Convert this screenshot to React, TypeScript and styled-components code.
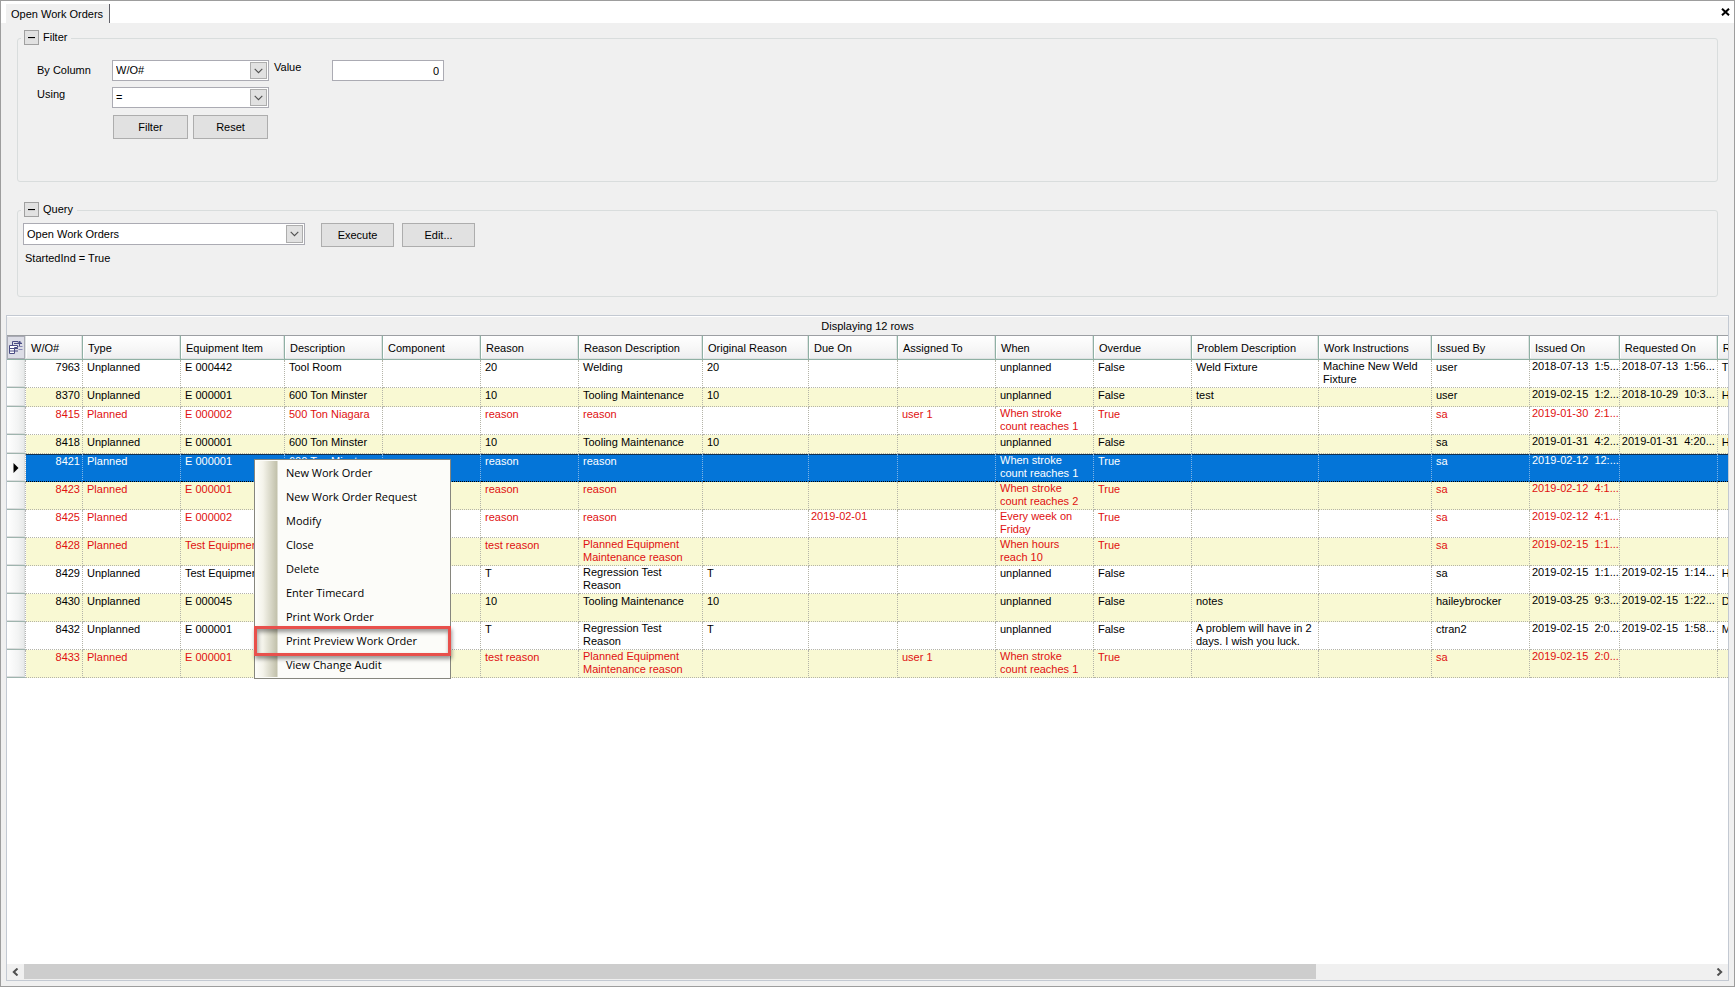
import React from "react";
import styled, { createGlobalStyle, css } from "styled-components";

const GlobalStyle = createGlobalStyle`
  *, *::before, *::after { box-sizing: border-box; }
  body {
    margin: 0;
    font-family: "Liberation Sans", Arial, sans-serif;
    font-size: 11px;
    line-height: 13px;
    color: #000;
  }
  button, input, select { font: inherit; color: inherit; }
`;

const Window = styled.div`
  display: flex;
  flex-direction: column;
  height: 100vh;
  min-height: 720px;
  border: 1px solid #9d9d9d;
  background: #f0f0f0;
  overflow: hidden;
`;

const TabStrip = styled.div`
  display: flex;
  justify-content: space-between;
  align-items: stretch;
  height: 22px;
  padding: 3px 4px 0 5px;
  background: #fff;
  flex: none;
`;

const Tab = styled.button`
  border: 0;
  border-right: 1px solid #606068;
  background: #f0f0f0;
  padding: 2px 6px 0 5px;
  white-space: nowrap;
`;

const CloseButton = styled.button`
  display: flex;
  align-items: center;
  border: 0;
  background: none;
  padding: 0 0 4px;
`;

const Panels = styled.div`
  display: flex;
  flex-direction: column;
  gap: 20px;
  padding: 7px 16px 0;
  flex: none;
`;

const Group = styled.section<{ $height: number }>`
  position: relative;
  min-height: ${(p) => p.$height}px;

  &::before {
    content: "";
    position: absolute;
    inset: 8px 0 0;
    border: 1px solid #d9dddd;
    border-radius: 3px;
  }
`;

const GroupHeader = styled.header`
  position: relative;
  display: flex;
  align-items: center;
  gap: 4px;
  width: fit-content;
  height: 15px;
  margin-left: 4px;
  padding: 0 4px 0 3px;
  background: #f0f0f0;
`;

const GroupTitle = styled.h2`
  margin: 0;
  font-size: 11px;
  font-weight: 400;
`;

const Toggle = styled.button`
  display: flex;
  align-items: center;
  justify-content: center;
  width: 15px;
  height: 15px;
  padding: 0;
  border: 1px solid #a0a0a0;
  background: #e1e1e1;
`;

const FilterForm = styled.form`
  position: relative;
  display: grid;
  grid-template-columns: 75px 157px 63px 112px;
  grid-template-rows: 21px 21px 24px;
  row-gap: 6px;
  padding: 15px 0 0 20px;
  align-items: center;
`;

const Label = styled.label<{ $raised?: boolean; $inset?: boolean }>`
  align-self: ${(p) => (p.$raised ? "start" : "center")};
  padding-top: ${(p) => (p.$raised ? 1 : 0)}px;
  padding-left: ${(p) => (p.$inset ? 5 : 0)}px;
`;

const ButtonRow = styled.div<{ $gap: number }>`
  display: flex;
  gap: ${(p) => p.$gap}px;
`;

const FilterButtons = styled(ButtonRow)`
  grid-column: 2;
  padding: 1px 0 0 1px;
`;

const PushButton = styled.button<{ $width: number }>`
  width: ${(p) => p.$width}px;
  height: 24px;
  padding: 1px 0 0;
  border: 1px solid #adadad;
  background: #e1e1e1;
`;

const TextInput = styled.input`
  width: 100%;
  height: 21px;
  padding: 0 4px;
  border: 1px solid #ababb3;
  background: #fff;
  text-align: right;
`;

const SelectBox = styled.div<{ $height: number }>`
  position: relative;
  height: ${(p) => p.$height}px;
`;

const SelectField = styled.select`
  appearance: none;
  width: 100%;
  height: 100%;
  padding: 0 20px 0 3px;
  border: 1px solid #ababb3;
  border-radius: 0;
  background: #fff;
`;

const SelectArrow = styled.span`
  position: absolute;
  inset: 2px 2px 2px auto;
  width: 17px;
  display: flex;
  align-items: center;
  justify-content: center;
  border: 1px solid #adadad;
  background: #e1e1e1;
  pointer-events: none;
`;

const QueryBody = styled.div`
  position: relative;
  display: flex;
  padding: 6px 0 0 6px;
  gap: 16px;
`;

const QuerySelect = styled.div`
  width: 282px;
`;

const QueryText = styled.p`
  position: relative;
  margin: 0;
  padding: 5px 0 0 8px;
`;

const Grid = styled.main`
  display: flex;
  flex-direction: column;
  flex: 1;
  min-height: 0;
  margin: 18px 5px 5px;
  border: 1px solid #c3c9d2;
  background: #fff;
`;

const Caption = styled.div`
  display: flex;
  align-items: center;
  justify-content: center;
  flex: none;
  height: 19px;
  border-top: 1px solid #fff;
  background: #f0f0f0;
`;

const TableArea = styled.div`
  flex: 1;
  min-height: 0;
  overflow: hidden;
`;

const Table = styled.table`
  width: max-content;
  table-layout: fixed;
  border-collapse: separate;
  border-spacing: 0;
`;

const HeadCell = styled.th`
  height: 25px;
  padding: 1px 4px 0 5px;
  border-top: 1px solid #9c9fa3;
  border-right: 1px solid #8fb0a4;
  border-bottom: 1px solid #8fb0a4;
  background: linear-gradient(#fff, #f6f6f6 60%, #ededf0);
  box-shadow: inset -1px -1px 0 #dfe3e2, inset 1px 1px 0 #fff;
  font-weight: 400;
  text-align: left;
  white-space: nowrap;
  overflow: hidden;
`;

const ChooserCell = styled(HeadCell)`
  padding: 0;
  border-right: 0;
`;

const ChooserButton = styled.button`
  display: flex;
  align-items: center;
  justify-content: center;
  width: 18px;
  height: 23px;
  padding: 0;
  border: 1px solid #a9aab4;
  background: #dcdde6;
`;

const RowHeader = styled.th`
  padding: 0;
  border-right: 1px dotted #b4b4b4;
  border-bottom: 1px solid #9fb4ae;
  background: linear-gradient(90deg, #fff, #f3f4f4 60%, #e6e8e8);
  box-shadow: inset -1px -1px 0 #dadddd;
  vertical-align: middle;

  svg { display: block; margin-left: 6px; }
`;

type Tone = "plain" | "overdue" | "selected";

const Row = styled.tr<{ $tone: Tone; $alternate: boolean; $tall: boolean }>`
  height: ${(p) => (p.$tall ? 28 : 19)}px;
  background: ${(p) => (p.$alternate ? "#f9f9d3" : "#fff")};
  color: ${(p) => (p.$tone === "overdue" ? "#e01010" : "#000")};

  ${(p) =>
    p.$tone === "selected" &&
    css`
      background: #0475d8;
      color: #fff;
    `}
`;

const cellPadding = { text: "4px", number: "2px", date: "1px 0 2px" };

const Cell = styled.td<{ $kind: "text" | "number" | "date"; $raised: boolean; $selected: boolean }>`
  height: inherit;
  padding: ${(p) => (p.$raised ? 0 : 1)}px ${(p) => cellPadding[p.$kind]} 0;
  ${(p) => p.$kind === "date" && "padding: 0 0 0 2px;"}
  border-right: 1px dotted ${(p) => (p.$selected ? "#7fb4e6" : "#b4b4a8")};
  border-bottom: 1px dotted ${(p) => (p.$selected ? "#000" : "#b4b4a8")};
  ${(p) => p.$selected && "box-shadow: inset 0 1px 0 #10304f;"}
  text-align: ${(p) => (p.$kind === "number" ? "right" : "left")};
  vertical-align: top;
  white-space: pre;
  overflow: hidden;
`;

const ScrollBar = styled.div`
  display: flex;
  flex: none;
  height: 16px;
  padding-bottom: 1px;
  background: #f0f0f0;
`;

const ScrollArrow = styled.button`
  display: flex;
  align-items: center;
  justify-content: center;
  width: 17px;
  padding: 0;
  border: 0;
  background: none;
`;

const ScrollTrack = styled.div`
  flex: 1;
`;

const ScrollThumb = styled.div`
  width: 76.6%;
  height: 100%;
  background: #cdcdcd;
`;

const Menu = styled.div`
  position: absolute;
  left: 254px;
  top: 459px;
  width: 197px;
  padding: 1px 0;
  border: 1px solid #86867e;
  background: #fcfcf9;
`;

const MenuItem = styled.button<{ $marked?: boolean }>`
  position: relative;
  display: block;
  width: 100%;
  height: 24px;
  padding: 0 0 0 31px;
  border: 0;
  background: linear-gradient(90deg, #fefefb, #f4f3ea 8px, #c2c1ab 22px, #fcfcf9 23px);
  font-family: "Open Sans", "Segoe UI", sans-serif;
  font-size: 11px;
  line-height: 24px;
  text-align: left;
  white-space: nowrap;

  ${(p) =>
    p.$marked &&
    css`
      z-index: 1;

      &::after {
        content: "";
        position: absolute;
        inset: -3px -1px;
        border: 3px solid #e8504c;
        box-shadow: 1px 3px 4px rgba(0, 0, 0, 0.4), inset 1px 3px 4px rgba(0, 0, 0, 0.4);
      }
    `}
`;

const Chevron = () => (
  <svg width="9" height="6" viewBox="0 0 9 6" aria-hidden="true">
    <path d="M0.7 0.8 L4.5 4.6 L8.3 0.8" fill="none" stroke="#505050" strokeWidth="1.1" />
  </svg>
);

const Minus = () => (
  <svg width="7" height="2" viewBox="0 0 7 2" aria-hidden="true">
    <path d="M0 0.5 H7" stroke="#000" strokeWidth="1.2" />
  </svg>
);

const CloseIcon = () => (
  <svg width="9" height="8" viewBox="0 0 9 8" aria-hidden="true">
    <path d="M1 0.7 L8 7.3 M8 0.7 L1 7.3" stroke="#000" strokeWidth="2" />
  </svg>
);

const CurrentRowIcon = () => (
  <svg width="6" height="10" viewBox="0 0 6 10" aria-hidden="true">
    <path d="M0.5 0 L5.5 5 L0.5 10 Z" fill="#000" />
  </svg>
);

const ChooserIcon = () => (
  <svg width="14" height="15" viewBox="0 0 14 15" aria-hidden="true">
    <g fill="none" stroke="#4a4c84" strokeWidth="1">
      <path d="M3.5 5 V1.5 H9" />
      <path d="M5 3.5 H13 M10.5 7 V1.5 M8.8 3 L10.5 1 L12.2 3" />
      <path d="M9.5 6.5 H13.5 M9.5 9.5 H13.5" stroke="#8485b4" />
      <path d="M0.5 5.5 H8.5 V7.5 H5.5 V13.5 H0.5 Z" fill="#fff" />
      <path d="M0.5 8.5 H9 M0.5 11 H9" />
    </g>
  </svg>
);

const Arrow = ({ direction }: { direction: "left" | "right" }) => (
  <svg width="7" height="8" viewBox="0 0 7 8" aria-hidden="true">
    <path
      d={direction === "left" ? "M5.5 0.5 L1.8 4 L5.5 7.5" : "M1.5 0.5 L5.2 4 L1.5 7.5"}
      fill="none"
      stroke="#505050"
      strokeWidth="2"
    />
  </svg>
);

interface SelectProps {
  id: string;
  label?: string;
  value: string;
  height?: number;
}

const Select = ({ id, label, value, height = 21 }: SelectProps) => (
  <SelectBox $height={height}>
    <SelectField id={id} aria-label={label} defaultValue={value}>
      <option>{value}</option>
    </SelectField>
    <SelectArrow>
      <Chevron />
    </SelectArrow>
  </SelectBox>
);

const columns: { title: string; width: number; kind: "text" | "number" | "date" }[] = [
  { title: "W/O#", width: 57, kind: "number" },
  { title: "Type", width: 98, kind: "text" },
  { title: "Equipment Item", width: 104, kind: "text" },
  { title: "Description", width: 98, kind: "text" },
  { title: "Component", width: 98, kind: "text" },
  { title: "Reason", width: 98, kind: "text" },
  { title: "Reason Description", width: 124, kind: "text" },
  { title: "Original Reason", width: 106, kind: "text" },
  { title: "Due On", width: 89, kind: "date" },
  { title: "Assigned To", width: 98, kind: "text" },
  { title: "When", width: 98, kind: "text" },
  { title: "Overdue", width: 98, kind: "text" },
  { title: "Problem Description", width: 127, kind: "text" },
  { title: "Work Instructions", width: 113, kind: "text" },
  { title: "Issued By", width: 98, kind: "text" },
  { title: "Issued On", width: 89, kind: "date" },
  { title: "Requested On", width: 98, kind: "date" },
  { title: "R", width: 98, kind: "text" },
];

interface Order {
  tone: Tone;
  tall: boolean;
  cells: string[];
}

const orders: Order[] = [
  { tone: "plain", tall: true, cells: ["7963", "Unplanned", "E 000442", "Tool Room", "", "20", "Welding", "20", "", "", "unplanned", "False", "Weld Fixture", "Machine New Weld\nFixture", "user", "2018-07-13  1:5...", "2018-07-13  1:56...", "T"] },
  { tone: "plain", tall: false, cells: ["8370", "Unplanned", "E 000001", "600 Ton Minster", "", "10", "Tooling Maintenance", "10", "", "", "unplanned", "False", "test", "", "user", "2019-02-15  1:2...", "2018-10-29  10:3...", "H"] },
  { tone: "overdue", tall: true, cells: ["8415", "Planned", "E 000002", "500 Ton Niagara", "", "reason", "reason", "", "", "user 1", "When stroke\ncount reaches 1", "True", "", "", "sa", "2019-01-30  2:1...", "", ""] },
  { tone: "plain", tall: false, cells: ["8418", "Unplanned", "E 000001", "600 Ton Minster", "", "10", "Tooling Maintenance", "10", "", "", "unplanned", "False", "", "", "sa", "2019-01-31  4:2...", "2019-01-31  4:20...", "H"] },
  { tone: "selected", tall: true, cells: ["8421", "Planned", "E 000001", "600 Ton Minster", "", "reason", "reason", "", "", "", "When stroke\ncount reaches 1", "True", "", "", "sa", "2019-02-12  12:...", "", ""] },
  { tone: "overdue", tall: true, cells: ["8423", "Planned", "E 000001", "", "", "reason", "reason", "", "", "", "When stroke\ncount reaches 2", "True", "", "", "sa", "2019-02-12  4:1...", "", ""] },
  { tone: "overdue", tall: true, cells: ["8425", "Planned", "E 000002", "", "", "reason", "reason", "", "2019-02-01", "", "Every week on\nFriday", "True", "", "", "sa", "2019-02-12  4:1...", "", ""] },
  { tone: "overdue", tall: true, cells: ["8428", "Planned", "Test Equipment", "", "", "test reason", "Planned Equipment\nMaintenance reason", "", "", "", "When hours\nreach 10", "True", "", "", "sa", "2019-02-15  1:1...", "", ""] },
  { tone: "plain", tall: true, cells: ["8429", "Unplanned", "Test Equipment", "", "", "T", "Regression Test\nReason", "T", "", "", "unplanned", "False", "", "", "sa", "2019-02-15  1:1...", "2019-02-15  1:14...", "H"] },
  { tone: "plain", tall: true, cells: ["8430", "Unplanned", "E 000045", "", "", "10", "Tooling Maintenance", "10", "", "", "unplanned", "False", "notes", "", "haileybrocker", "2019-03-25  9:3...", "2019-02-15  1:22...", "D"] },
  { tone: "plain", tall: true, cells: ["8432", "Unplanned", "E 000001", "", "", "T", "Regression Test\nReason", "T", "", "", "unplanned", "False", "A problem will have in 2\ndays. I wish you luck.", "", "ctran2", "2019-02-15  2:0...", "2019-02-15  1:58...", "M"] },
  { tone: "overdue", tall: true, cells: ["8433", "Planned", "E 000001", "", "", "test reason", "Planned Equipment\nMaintenance reason", "", "", "user 1", "When stroke\ncount reaches 1", "True", "", "", "sa", "2019-02-15  2:0...", "", ""] },
];

const menuItems = [
  "New Work Order",
  "New Work Order Request",
  "Modify",
  "Close",
  "Delete",
  "Enter Timecard",
  "Print Work Order",
  "Print Preview Work Order",
  "View Change Audit",
];

export default function App() {
  return (
    <>
      <GlobalStyle />
      <Window>
        <TabStrip>
          <Tab type="button">Open Work Orders</Tab>
          <CloseButton type="button" aria-label="Close">
            <CloseIcon />
          </CloseButton>
        </TabStrip>

        <Panels>
          <Group $height={152}>
            <GroupHeader>
              <Toggle type="button" aria-label="Collapse filter">
                <Minus />
              </Toggle>
              <GroupTitle>Filter</GroupTitle>
            </GroupHeader>
            <FilterForm onSubmit={(event) => event.preventDefault()}>
              <Label htmlFor="column">By Column</Label>
              <Select id="column" value="W/O#" />
              <Label htmlFor="value" $raised $inset>
                Value
              </Label>
              <TextInput id="value" type="text" defaultValue="0" />
              <Label htmlFor="operator" $raised>
                Using
              </Label>
              <Select id="operator" value="=" />
              <FilterButtons $gap={5}>
                <PushButton type="submit" $width={75}>
                  Filter
                </PushButton>
                <PushButton type="reset" $width={75}>
                  Reset
                </PushButton>
              </FilterButtons>
            </FilterForm>
          </Group>

          <Group $height={95}>
            <GroupHeader>
              <Toggle type="button" aria-label="Collapse query">
                <Minus />
              </Toggle>
              <GroupTitle>Query</GroupTitle>
            </GroupHeader>
            <QueryBody>
              <QuerySelect>
                <Select id="query" label="Query" value="Open Work Orders" height={22} />
              </QuerySelect>
              <ButtonRow $gap={8}>
                <PushButton type="button" $width={73}>
                  Execute
                </PushButton>
                <PushButton type="button" $width={73}>
                  Edit...
                </PushButton>
              </ButtonRow>
            </QueryBody>
            <QueryText>StartedInd = True</QueryText>
          </Group>
        </Panels>

        <Grid>
          <Caption>Displaying 12 rows</Caption>
          <TableArea>
            <Table>
              <colgroup>
                <col width={19} />
                {columns.map((column) => (
                  <col key={column.title} width={column.width} />
                ))}
              </colgroup>
              <thead>
                <tr>
                  <ChooserCell>
                    <ChooserButton type="button" aria-label="Choose columns">
                      <ChooserIcon />
                    </ChooserButton>
                  </ChooserCell>
                  {columns.map((column) => (
                    <HeadCell key={column.title} scope="col">
                      {column.title}
                    </HeadCell>
                  ))}
                </tr>
              </thead>
              <tbody>
                {orders.map((order, index) => (
                  <Row key={order.cells[0]} $tone={order.tone} $alternate={index % 2 === 1} $tall={order.tall}>
                    <RowHeader scope="row" aria-label={order.cells[0]}>
                      {order.tone === "selected" && <CurrentRowIcon />}
                    </RowHeader>
                    {order.cells.map((text, i) => (
                      <Cell
                        key={columns[i].title}
                        $kind={columns[i].kind}
                        $raised={columns[i].kind === "date" || text.includes("\n")}
                        $selected={order.tone === "selected"}
                      >
                        {text}
                      </Cell>
                    ))}
                  </Row>
                ))}
              </tbody>
            </Table>
          </TableArea>
          <ScrollBar>
            <ScrollArrow type="button" aria-label="Scroll left">
              <Arrow direction="left" />
            </ScrollArrow>
            <ScrollTrack>
              <ScrollThumb />
            </ScrollTrack>
            <ScrollArrow type="button" aria-label="Scroll right">
              <Arrow direction="right" />
            </ScrollArrow>
          </ScrollBar>
        </Grid>
      </Window>

      <Menu role="menu">
        {menuItems.map((item) => (
          <MenuItem key={item} type="button" role="menuitem" $marked={item === "Print Preview Work Order"}>
            {item}
          </MenuItem>
        ))}
      </Menu>
    </>
  );
}
